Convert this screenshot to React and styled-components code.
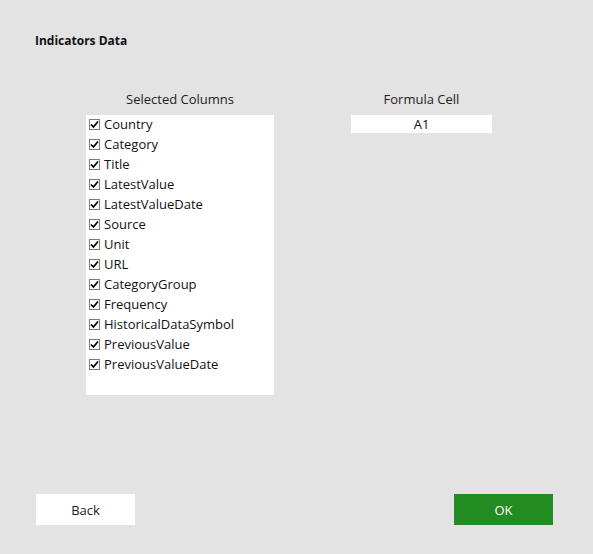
import React from 'react';
import styled, { createGlobalStyle } from 'styled-components';

const GlobalStyle = createGlobalStyle`
  html, body {
    margin: 0;
    padding: 0;
    background: #e3e3e3;
  }
  * {
    box-sizing: border-box;
  }
`;

const columns = [
  'Country',
  'Category',
  'Title',
  'LatestValue',
  'LatestValueDate',
  'Source',
  'Unit',
  'URL',
  'CategoryGroup',
  'Frequency',
  'HistoricalDataSymbol',
  'PreviousValue',
  'PreviousValueDate',
];

const Page = styled.div`
  width: 593px;
  height: 554px;
  display: flex;
  flex-direction: column;
  padding: 32px 40px 29px 36px;
  background: #e3e3e3;
  font-family: 'Open Sans', 'Noto Sans', sans-serif;
  font-size: 13px;
  color: #1a1a1a;
`;

const Title = styled.h1`
  margin: 0 0 0 -1px;
  font-size: 12px;
  font-weight: 700;
  line-height: 18px;
  color: #111;
`;

const Columns = styled.div`
  display: flex;
  align-items: flex-start;
  gap: 77px;
  margin-top: 40px;
  padding-left: 50px;
`;

const Section = styled.div`
  display: flex;
  flex-direction: column;
  width: ${(p) => p.$width}px;
`;

const Label = styled.div`
  height: 25px;
  line-height: 18px;
  text-align: center;
  color: #222;
`;

const List = styled.div`
  height: 280px;
  background: #fff;
  display: flex;
  flex-direction: column;
`;

const Row = styled.label`
  display: flex;
  align-items: center;
  height: 20px;
  padding: 0 0 2px 3px;
  gap: 4px;
  color: #111;
`;

const Box = styled.span`
  width: 11px;
  height: 11px;
  margin-top: 1px;
  border: 1px solid #7a7a7a;
  background: #fff;
  display: flex;
  align-items: center;
  justify-content: center;
`;

const Input = styled.div`
  height: 18px;
  line-height: 18px;
  background: #fff;
  text-align: center;
  color: #111;
`;

const Footer = styled.div`
  margin-top: auto;
  display: flex;
  justify-content: space-between;
`;

const Button = styled.button`
  width: 99px;
  height: 31px;
  border: none;
  font-family: inherit;
  font-size: 13px;
  background: ${(p) => (p.$primary ? '#228b22' : '#fff')};
  color: ${(p) => (p.$primary ? '#fff' : '#222')};
  font-weight: ${(p) => (p.$primary ? 500 : 400)};
`;

function Check() {
  return (
    <Box>
      <svg width="9" height="9" viewBox="0 0 9 9">
        <path d="M1 4.5 L3.4 7 L8 1.5" fill="none" stroke="#000" strokeWidth="1.8" />
      </svg>
    </Box>
  );
}

export default function App() {
  return (
    <Page>
      <GlobalStyle />
      <Title>Indicators Data</Title>
      <Columns>
        <Section $width={188}>
          <Label>Selected Columns</Label>
          <List>
            {columns.map((c) => (
              <Row key={c}>
                <Check />
                {c}
              </Row>
            ))}
          </List>
        </Section>
        <Section $width={141}>
          <Label>Formula Cell</Label>
          <Input>A1</Input>
        </Section>
      </Columns>
      <Footer>
        <Button>Back</Button>
        <Button $primary>OK</Button>
      </Footer>
    </Page>
  );
}
